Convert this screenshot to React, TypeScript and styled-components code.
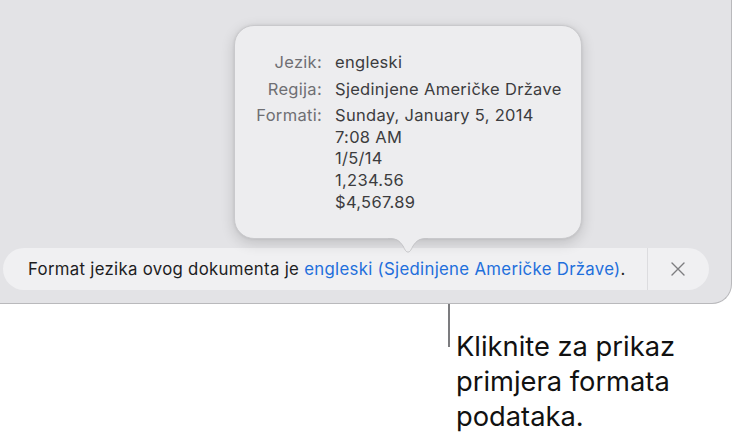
import styled, { createGlobalStyle } from 'styled-components'

const GlobalStyle = createGlobalStyle`
  html, body {
    margin: 0;
    padding: 0;
    background: #ffffff;
  }
  body {
    font-family: Inter, "Helvetica Neue", Arial, sans-serif;
    -webkit-font-smoothing: antialiased;
  }
`

const Page = styled.div`
  width: 732px;
  height: 444px;
  overflow: hidden;
  background: #ffffff;
`

const Window = styled.div`
  position: relative;
  box-sizing: border-box;
  width: 732px;
  height: 304px;
  background: #e3e3e6;
  border-right: 1px solid #b9b9bc;
  border-bottom: 1px solid #b9b9bc;
  border-bottom-right-radius: 20px;
  display: flex;
  flex-direction: column;
  justify-content: flex-end;
  padding: 0 22px 13px 3px;
`

const Banner = styled.div`
  display: flex;
  align-items: stretch;
  height: 42px;
  border-radius: 21px;
  background: #f0f0f2;
`

const BannerText = styled.p`
  flex: 1;
  margin: 0;
  padding-left: 25px;
  display: flex;
  align-items: center;
  font-size: 16.8px;
  letter-spacing: 0.3px;
  color: #1d1d1f;
  white-space: pre;
`

const Link = styled.span`
  color: #1f6fdc;
`

const CloseButton = styled.button`
  width: 62px;
  border: 0;
  border-left: 1px solid #dcdcdf;
  background: transparent;
  display: flex;
  align-items: center;
  justify-content: center;
  padding: 0 2px 0 0;
  color: #7d7d80;
`

const Popover = styled.div`
  position: absolute;
  left: 234px;
  top: 25px;
  box-sizing: border-box;
  width: 348px;
  height: 214px;
  padding: 26px 0 0 0;
  border-radius: 20px;
  background: #ededef;
  border: 1px solid #c9c9cc;
  box-shadow: 0 4px 14px rgba(0, 0, 0, 0.16), 0 0 3px rgba(0, 0, 0, 0.08);
  color: #3c3c3e;
  font-size: 16.5px;
  letter-spacing: 0.3px;
`

const Tail = styled.svg`
  position: absolute;
  left: 153px;
  bottom: -16px;
`

const InfoGrid = styled.dl`
  margin: 0;
  display: grid;
  grid-template-columns: 87px auto;
  column-gap: 13px;
  row-gap: 5px;
`

const Label = styled.dt`
  text-align: right;
  color: #6f6f73;
  line-height: 21.6px;
`

const Value = styled.dd`
  margin: 0;
  line-height: 21.6px;
`

const Callout = styled.div`
  display: flex;
  align-items: flex-start;
  gap: 6px;
  padding-left: 448px;
  margin-top: -26px;
`

const Leader = styled.div`
  width: 2px;
  height: 69px;
  background: #7c7c7f;
`

const CalloutText = styled.p`
  margin: 51px 0 0 0;
  font-size: 27.3px;
  line-height: 35px;
  color: #111111;
`

export default function App() {
  return (
    <Page>
      <GlobalStyle />
      <Window>
        <Popover>
          <InfoGrid>
            <Label>Jezik:</Label>
            <Value>engleski</Value>
            <Label>Regija:</Label>
            <Value>Sjedinjene Američke Države</Value>
            <Label>Formati:</Label>
            <Value>
              Sunday, January 5, 2014
              <br />
              7:08 AM
              <br />
              1/5/14
              <br />
              1,234.56
              <br />
              $4,567.89
            </Value>
          </InfoGrid>
          <Tail width="40" height="16" viewBox="0 0 40 16">
            <path
              d="M0 0 C8 0 11 2 15 8 C17 12 18 14 20 14 C22 14 23 12 25 8 C29 2 32 0 40 0 Z"
              fill="#ededef"
            />
            <path
              d="M0 0.5 C8 0.5 11 2 15 8 C17 12 18 14 20 14 C22 14 23 12 25 8 C29 2 32 0.5 40 0.5"
              fill="none"
              stroke="#c4c4c7"
              strokeWidth="1"
            />
          </Tail>
        </Popover>
        <Banner>
          <BannerText>
            Format jezika ovog dokumenta je <Link>engleski (Sjedinjene Američke Države)</Link>.
          </BannerText>
          <CloseButton aria-label="Zatvori">
            <svg width="14" height="14" viewBox="0 0 14 14">
              <path d="M1 1 L13 13 M13 1 L1 13" stroke="currentColor" strokeWidth="1.4" strokeLinecap="round" />
            </svg>
          </CloseButton>
        </Banner>
      </Window>
      <Callout>
        <Leader />
        <CalloutText>
          Kliknite za prikaz
          <br />
          primjera formata
          <br />
          podataka.
        </CalloutText>
      </Callout>
    </Page>
  )
}
